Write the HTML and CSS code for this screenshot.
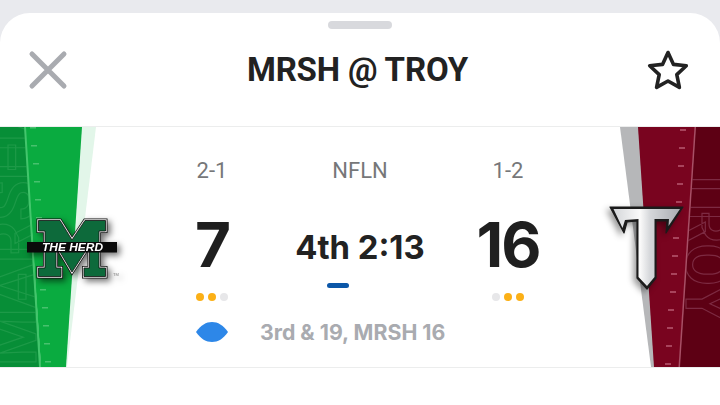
FILE: index.html
```html
<!DOCTYPE html>
<html lang="en">
<head>
<meta charset="utf-8">
<title>MRSH @ TROY</title>
<link rel="stylesheet" href="styles.css">
</head>
<body>
<main class="sheet">
  <div class="grabber"></div>
  <header class="header">
    <svg class="close" viewBox="0 0 44 44"><path d="M6 6 38 38M38 6 6 38"/></svg>
    <h1 class="title">MRSH @ TROY</h1>
    <svg class="star" viewBox="0 0 44 42"><path d="M22 3.5 27.5 15.4 40.3 16.8 30.8 25.6 33.4 38.4 22 32 10.6 38.4 13.2 25.6 3.7 16.8 16.5 15.4Z"/></svg>
  </header>
  <section class="band">
    <svg class="art" viewBox="0 127 720 240" aria-hidden="true">
      <defs>
        <clipPath id="clip-g"><polygon points="0,127 24,127 39,367 0,367"/></clipPath>
        <clipPath id="clip-r"><polygon points="696,127 720,127 720,367 680,367"/></clipPath>
      </defs>
      <polygon class="g-dark" points="0,127 25,127 41,367 0,367"/>
      <g class="mark-g" clip-path="url(#clip-g)"><text transform="translate(36 366) rotate(-90)">MARSHALL</text></g>
      <polygon class="g-pale" points="80,127 96,127 67,367 64,367"/>
      <polygon class="g-mid" points="25,127 82,127 66,367 41,367"/>
      <polygon class="g-line" points="24,127 26,127 41,367 39,367"/>
      <g class="g-tick">
        <rect x="30" y="127" width="6" height="1.5"/><rect x="31" y="145" width="6" height="1.5"/><rect x="33" y="163" width="6" height="1.5"/><rect x="34" y="181" width="6" height="1.5"/><rect x="35" y="199" width="6" height="1.5"/><rect x="36" y="217" width="6" height="1.5"/><rect x="40" y="289" width="6" height="1.5"/><rect x="42" y="307" width="6" height="1.5"/><rect x="43" y="325" width="6" height="1.5"/><rect x="44" y="343" width="6" height="1.5"/><rect x="45" y="361" width="6" height="1.5"/>
      </g>
      <polygon class="r-gray" points="620,127 640,127 656,367 651,367"/>
      <polygon class="r-mid" points="638,127 720,127 720,367 654,367"/>
      <polygon class="r-dark" points="695,127 720,127 720,367 679,367"/>
      <g class="mark-r" clip-path="url(#clip-r)"><text transform="translate(686 165) rotate(90)">TROY</text></g>
      <polygon class="r-line" points="694.5,127 696,127 680,367 678.5,367"/>
      <g class="r-tick">
        <rect x="680" y="129" width="6" height="2"/><rect x="679" y="147" width="6" height="2"/><rect x="678" y="165" width="6" height="2"/><rect x="677" y="183" width="6" height="2"/><rect x="676" y="201" width="6" height="2"/><rect x="673" y="237" width="6" height="2"/><rect x="672" y="255" width="6" height="2"/><rect x="671" y="273" width="6" height="2"/><rect x="670" y="291" width="6" height="2"/><rect x="668" y="309" width="6" height="2"/><rect x="667" y="327" width="6" height="2"/><rect x="666" y="345" width="6" height="2"/><rect x="665" y="363" width="6" height="2"/>
      </g>
    </svg>

    <svg class="logo logo-m" viewBox="27 215 92 68">
      <polygon class="m-out" points="38.5,220.5 60,220.5 72,240 85,220.5 105.5,220.5 105.5,231 99,231 99,268 105.5,268 105.5,276.5 84,276.5 84,268 89.5,268 89.5,245 72,272 56,245 56,268 61,268 61,276.5 38.5,276.5 38.5,268 45,268 45,231 38.5,231"/>
      <polygon class="m-white" points="38.5,220.5 60,220.5 72,240 85,220.5 105.5,220.5 105.5,231 99,231 99,268 105.5,268 105.5,276.5 84,276.5 84,268 89.5,268 89.5,245 72,272 56,245 56,268 61,268 61,276.5 38.5,276.5 38.5,268 45,268 45,231 38.5,231"/>
      <polygon class="m-fill" points="38.5,220.5 60,220.5 72,240 85,220.5 105.5,220.5 105.5,231 99,231 99,268 105.5,268 105.5,276.5 84,276.5 84,268 89.5,268 89.5,245 72,272 56,245 56,268 61,268 61,276.5 38.5,276.5 38.5,268 45,268 45,231 38.5,231"/>
      <rect class="m-bar" x="27" y="242" width="90" height="10.5"/>
      <text class="m-text" x="42" y="251" textLength="61" lengthAdjust="spacingAndGlyphs">THE HERD</text>
      <text class="m-tm" x="113" y="276">TM</text>
    </svg>

    <div class="record rec-a">2-1</div>
    <div class="record rec-b">NFLN</div>
    <div class="record rec-c">1-2</div>

    <div class="score score-a">7</div>
    <div class="clock">4th 2:13</div>
    <div class="score score-c">16</div>

    <div class="dots dots-a"><i class="on"></i><i class="on"></i><i></i></div>
    <div class="possession"></div>
    <div class="dots dots-c"><i></i><i class="on"></i><i class="on"></i></div>

    <div class="situation">
      <svg class="ball" viewBox="0 0 32 20"><path d="M0 10C5 3 10 0 16 0S27 3 32 10C27 17 22 20 16 20S5 17 0 10Z"/></svg>
      <span>3rd &amp; 19, MRSH 16</span>
    </div>

    <svg class="logo logo-t" viewBox="605 203 82 90">
      <defs>
        <linearGradient id="metal" x1="0" x2="1" y1="0" y2="0">
          <stop offset="0" stop-color="#d4d6d9"/><stop offset=".4" stop-color="#fafafa"/><stop offset=".55" stop-color="#d5d7da"/><stop offset="1" stop-color="#a9acb0"/>
        </linearGradient>
      </defs>
      <polygon class="t-out" points="610,207 683,207 666,233 667,221 656,221 656,278 647,289 637,278 637,221 627,222 624,233"/>
      <polygon class="t-metal" points="613.5,209 680,209 668.5,226 669,219 654.5,219 654.5,277 647,286 638.5,277 638.5,219 625,220 622.5,228"/>
    </svg>
  </section>
</main>
</body>
</html>
```
FILE: styles.css
```css
* { box-sizing: border-box; }
html, body { margin: 0; height: 100%; }
body {
  background: #e9eaee;
  padding-top: 13px;
  overflow: hidden;
  font-family: Roboto, "Liberation Sans", sans-serif;
  color: #222;
}
.sheet {
  height: 392px;
  background: #fff;
  border-radius: 30px 30px 0 0;
}
.grabber {
  width: 64px;
  height: 8px;
  margin: 0 auto;
  position: relative;
  top: 8px;
  border-radius: 4px;
  background: #d8d9dd;
}
.header {
  height: 105px;
  display: flex;
  align-items: center;
  justify-content: space-between;
  padding: 0 30px 8px 26px;
}
.close { width: 44px; height: 44px; }
.close path { fill: none; stroke: #a9abb0; stroke-width: 5; stroke-linecap: round; }
.star { width: 44px; height: 42px; }
.star path { fill: none; stroke: #222; stroke-width: 3.6; stroke-linejoin: round; }
.title {
  margin: 0 0 0 -1px;
  font-size: 33px;
  font-weight: 700;
  letter-spacing: -.15px;
  line-height: 40px;
}
.band {
  position: relative;
  height: 242px;
  border-top: 1px solid #eceded;
  border-bottom: 1px solid #eceded;
  display: grid;
  grid-template-columns: 138px repeat(3, 148px) 138px;
  grid-template-rows: 28px 100px 20px 50px;
  padding-top: 28px;
}
.art { position: absolute; left: 0; top: 0; width: 720px; height: 240px; }
.g-dark { fill: #078e37; }
.g-mid { fill: #0aab40; }
.g-pale { fill: #e2f6e9; }
.g-line { fill: #43c66c; }
.g-tick rect { fill: #47c16e; }
.mark-g text, .mark-r text { font-size: 66px; font-weight: 700; fill: none; stroke-width: 1.2; }
.mark-g text { stroke: #1d9a48; }
.mark-r text { stroke: #7d2a42; font-size: 62px; }
.r-gray { fill: #b6b7b9; }
.r-mid { fill: #79041f; }
.r-dark { fill: #5d0014; }
.r-line { fill: #a85066; }
.r-tick rect { fill: #a8445c; }

.record, .score, .clock, .dots, .possession, .situation, .logo { position: relative; }
.record {
  font-size: 22px;
  line-height: 32px;
  color: #767779;
  text-align: center;
}
.rec-a { grid-area: 1 / 2; }
.rec-b { grid-area: 1 / 3; }
.rec-c { grid-area: 1 / 4; }
.score {
  font-family: Inter, Roboto, sans-serif;
  font-size: 62px;
  font-weight: 700;
  letter-spacing: -2px;
  line-height: 76px;
  text-align: center;
  margin-top: 24px;
  color: #1f1f1f;
}
.score-a { grid-area: 2 / 2; }
.score-c { grid-area: 2 / 4; }
.clock {
  grid-area: 2 / 3;
  font-family: Inter, Roboto, sans-serif;
  font-size: 32.8px;
  font-weight: 700;
  line-height: 76px;
  margin-top: 26px;
  text-align: center;
  color: #222;
}
.possession {
  grid-area: 3 / 3;
  justify-self: start;
  margin-left: 41px;
  width: 22px;
  height: 5px;
  border-radius: 2.5px;
  background: #0c57a8;
}
.dots { display: flex; justify-content: center; gap: 4px; padding-top: 10px; }
.dots i { width: 8px; height: 8px; border-radius: 50%; background: #e7e7e9; }
.dots i.on { background: #fbb017; }
.dots-a { grid-area: 3 / 2; }
.dots-c { grid-area: 3 / 4; }
.situation {
  grid-row: 4;
  grid-column: 2 / span 3;
  display: flex;
  align-items: center;
  gap: 32px;
  height: 30px;
  margin-top: 14px;
  padding-left: 58px;
  font-family: Inter, Roboto, sans-serif;
  font-size: 21.3px;
  font-weight: 700;
  color: #a9abb0;
}
.ball { width: 32px; height: 20px; }
.ball path { fill: #2d87e8; }

.logo { overflow: visible; grid-row: 1 / 5; align-self: start; justify-self: start; }
.logo-m { grid-column: 1; width: 92px; height: 68px; margin: 60px 0 0 27px; filter: drop-shadow(3px 3px 3px rgba(0,0,0,.55)); }
.logo-t { grid-column: 5; width: 82px; height: 90px; margin: 48px 0 0 23px; filter: drop-shadow(-3px 3px 3px rgba(0,0,0,.4)); }
.m-out { fill: #111; stroke: #111; stroke-width: 4; stroke-linejoin: miter; }
.m-white { fill: #fff; stroke: #eee; stroke-width: 2.4; stroke-linejoin: miter; }
.m-fill { fill: #0d6a3b; stroke: #111; stroke-width: .8; }
.m-bar { fill: #0a0a0a; }
.m-text { font: italic 700 10.5px "Liberation Sans", sans-serif; fill: #fff; }
.m-tm { font: 4px "Liberation Sans", sans-serif; fill: #777; }
.t-out { fill: #1b1b1b; stroke: #1b1b1b; stroke-width: 1.2; stroke-linejoin: round; }
.t-metal { fill: url(#metal); }
```
